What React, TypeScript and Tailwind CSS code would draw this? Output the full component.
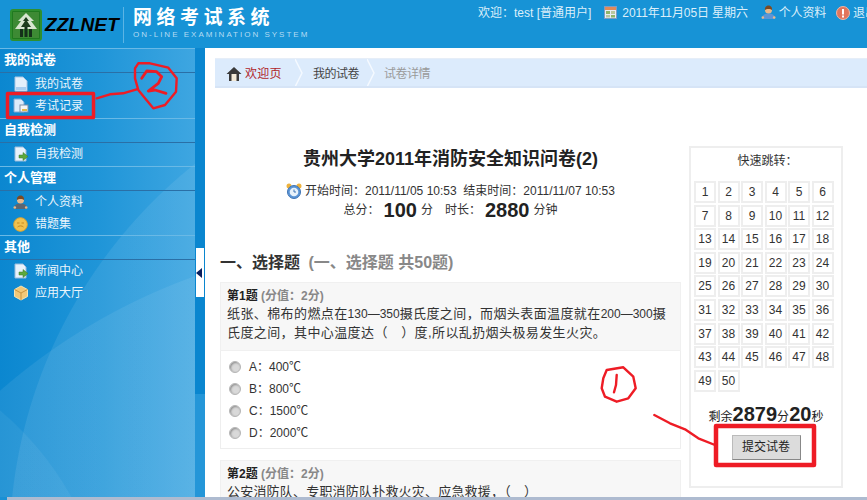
const font = "font-['Liberation_Sans','Noto_Sans_CJK_SC',sans-serif]";

function DocIcon() {
  return (
    <svg width="16" height="16" viewBox="0 0 16 16">
      <path d="M2 1h8l4 4v10H2z" fill="#e4f0fb" stroke="#a9c6e4" />
      <path d="M3 11h10v3H3z" fill="#a8cdf0" />
    </svg>
  );
}

function RecordIcon() {
  return (
    <svg width="16" height="16" viewBox="0 0 16 16">
      <path d="M1 1h7l3 3v10H1z" fill="#dcebfa" stroke="#7fa8d4" />
      <rect x="7" y="7" width="8" height="7" fill="#f4f4f4" stroke="#7a8ea8" />
      <rect x="9" y="11" width="5" height="2" fill="#e0b84a" />
    </svg>
  );
}

function DocArrowIcon() {
  return (
    <svg width="16" height="16" viewBox="0 0 16 16">
      <path d="M2 1h8l3 3v11H2z" fill="#e8f2fb" stroke="#9bbcdc" />
      <path d="M6 9h4V6.500l5 4-5 4V12H6z" fill="#5da83c" stroke="#3f7f28" strokeWidth="0.5" />
    </svg>
  );
}

function PersonIcon({ shirt = "#5c6672" }: { shirt?: string }) {
  return (
    <svg width="15" height="15" viewBox="0 0 15 15">
      <path d="M1 14c0-4 2.500-5.500 6.500-5.500S14 10 14 14z" fill={shirt} />
      <circle cx="7.500" cy="5" r="3.500" fill="#e8b98c" />
      <path d="M4 5c-.5-3 1.500-4.500 3.500-4.500S11.500 2 11 5C10 3.500 5 3.500 4 5z" fill="#7a4a25" />
      <circle cx="1.800" cy="12.500" r="1.300" fill="#e8b98c" />
      <circle cx="13.200" cy="12.500" r="1.300" fill="#e8b98c" />
    </svg>
  );
}

function SmileIcon() {
  return (
    <svg width="15" height="15" viewBox="0 0 15 15">
      <circle cx="7.500" cy="7.500" r="6.800" fill="#f2c14e" stroke="#e0a52e" />
      <path d="M4 6h2.500M8.500 6H11" stroke="#c98a1e" />
      <path d="M4.500 10c1.500-1.500 4.500-1.500 6 0" stroke="#c98a1e" fill="none" />
    </svg>
  );
}

function BoxIcon() {
  return (
    <svg width="16" height="16" viewBox="0 0 16 16">
      <path d="M8 1l6.500 3.500v7L8 15l-6.500-3.500v-7z" fill="#f1c878" stroke="#f7e3b0" />
      <path d="M1.500 4.500L8 8l6.500-3.500M8 8v7" stroke="#c9933e" fill="none" />
    </svg>
  );
}

function CalendarIcon() {
  return (
    <svg width="13" height="13" viewBox="0 0 13 13">
      <rect x="0.500" y="0.500" width="12" height="12" fill="#e8eef5" stroke="#7d9cc4" />
      <rect x="1" y="1" width="11" height="3" fill="#e08a5a" />
      <rect x="2" y="5" width="4" height="3" fill="#8fb56a" />
      <rect x="7" y="5" width="4" height="3" fill="#b9c7a0" />
      <rect x="2" y="9" width="4" height="2.500" fill="#b9c7a0" />
      <rect x="7" y="9" width="4" height="2.500" fill="#8fb56a" />
    </svg>
  );
}

function AlertIcon() {
  return (
    <svg width="14" height="14" viewBox="0 0 14 14">
      <circle cx="7" cy="7" r="6.500" fill="#e2755c" stroke="#f0b6a4" />
      <rect x="6" y="3" width="2" height="5.500" fill="#fff" />
      <rect x="6" y="9.500" width="2" height="2" fill="#fff" />
    </svg>
  );
}

function HomeIcon() {
  return (
    <svg width="16" height="16" viewBox="0 0 16 16">
      <path d="M8 1L0.500 8H3v7h10V8h2.500z" fill="#3a3a3a" />
      <rect x="5.500" y="8" width="5" height="7" fill="#f3ead8" />
    </svg>
  );
}

function ClockIcon() {
  return (
    <svg width="16" height="16" viewBox="0 0 16 16">
      <circle cx="3" cy="3" r="2.500" fill="#eeb23e" />
      <circle cx="13" cy="3" r="2.500" fill="#eeb23e" />
      <circle cx="8" cy="9" r="6.500" fill="#5b95d6" stroke="#3f74b4" />
      <circle cx="8" cy="9" r="4.300" fill="#e8f2fb" />
      <path d="M8 6.500V9h2" stroke="#3f74b4" fill="none" />
    </svg>
  );
}

function LogoIcon() {
  return (
    <svg width="32" height="32" viewBox="0 0 32 32" className="shrink-0">
      <rect x="1" y="1" width="30" height="30" rx="2" fill="#1f7a1f" stroke="#2f8f2f" strokeWidth="2" />
      <path d="M3 3h26v26H3z" fill="#3d8a34" />
      <path d="M16 4l8 8h-3l6 8H5l6-8H8z" fill="#d8e6d0" />
      <path d="M16 8l3 4h-2l4 6H11l4-6h-2z" fill="#1d3d1d" />
      <path d="M10 20h3v8h-3zM19 20h3v8h-3zM14.500 18h3v10h-3z" fill="#14301a" />
    </svg>
  );
}

function Chevron() {
  return (
    <svg width="8" height="28" viewBox="0 0 8 28" fill="none" stroke="#f4f9ff" strokeWidth="1.500">
      <path d="M0 0l7 14L0 28" />
    </svg>
  );
}

function MenuGroup({ title, items, extra }: { title: string; items: { icon: React.ReactNode; label: string }[]; extra?: boolean }) {
  return (
    <div className={extra ? "border-t border-[#69b9e6] pb-px" : "border-t border-[#69b9e6]"}>
      <div className="h-6 pl-1 border-b border-[#2a6fa6] text-[13px] font-bold leading-[22px] text-white">{title}</div>
      {items.map((item) => (
        <div key={item.label} className="h-[22px] flex items-center text-xs text-[#eaf5fc]">
          <span className="w-[35px] flex justify-center pl-[9px] pr-[3px]">{item.icon}</span>
          {item.label}
        </div>
      ))}
    </div>
  );
}

function Option({ label }: { label: string }) {
  return (
    <div className="h-[22px] flex items-center text-xs text-[#333]">
      <span className="ml-2 mr-2 w-3 h-3 rounded-full border border-[#b5b5b5] bg-[#d9d9d9] shadow-[inset_1px_1px_2px_#8f8f8f]" />
      {label}
    </div>
  );
}

export default function App() {
  const numbers = Array.from({ length: 50 }, (_, i) => i + 1);
  return (
    <div className={`${font} relative w-[867px] h-[500px] overflow-hidden bg-white flex flex-col`}>
      <header className="h-12 shrink-0 bg-[#1793d6] flex items-start">
        <div className="w-[478px] shrink-0 flex items-start pl-[10px] pt-[9px]">
          <LogoIcon />
          <span className="ml-[3px] mt-[6px] text-[19px] leading-5 font-bold italic tracking-[0.2px] text-black">ZZLNET</span>
          <span className="ml-[4px] -mt-[2px] h-9 w-px bg-[#5cb4e4]" />
          <div className="ml-[9px] -mt-[1px]">
            <div className="text-[19px] leading-[19px] font-bold tracking-[4.500px] text-white whitespace-nowrap">网络考试系统</div>
            <div className="mt-[3px] text-[8px] leading-[10px] tracking-[2px] text-[#b5dcf3] whitespace-nowrap">ON-LINE EXAMINATION SYSTEM</div>
          </div>
        </div>
        <div className="flex items-center h-[25px] text-xs text-[#dceffa] whitespace-nowrap">
          <span>欢迎：test [普通用户]</span>
          <span className="ml-[13px] mr-[5px]"><CalendarIcon /></span>
          <span className="tracking-[-0.1px]">2011年11月05日 星期六</span>
          <span className="ml-[13px] mr-[3px]"><PersonIcon shirt="#5b95d6" /></span>
          <span className="tracking-[-0.2px]">个人资料</span>
          <span className="ml-[10px] mr-[3px]"><AlertIcon /></span>
          <span>退出</span>
        </div>
      </header>

      <div className="flex-1 flex min-h-0">
        <aside className="w-[195px] shrink-0 bg-[radial-gradient(circle_at_400px_800px,rgba(255,255,255,0.07)_607px,transparent_608px),radial-gradient(circle_at_500px_500px,rgba(255,255,255,0.08)_490px,transparent_491px),radial-gradient(circle_at_-200px_600px,rgba(255,255,255,0.05)_310px,transparent_311px),linear-gradient(90deg,#0b87d0_0%,#1f95d8_50%,#3ea6e1_100%)]">
          <MenuGroup
            extra
            title="我的试卷"
            items={[
              { icon: <DocIcon />, label: "我的试卷" },
              { icon: <RecordIcon />, label: "考试记录" },
            ]}
          />
          <MenuGroup extra title="自我检测" items={[{ icon: <DocArrowIcon />, label: "自我检测" }]} />
          <MenuGroup
            title="个人管理"
            items={[
              { icon: <PersonIcon />, label: "个人资料" },
              { icon: <SmileIcon />, label: "错题集" },
            ]}
          />
          <MenuGroup
            title="其他"
            items={[
              { icon: <DocArrowIcon />, label: "新闻中心" },
              { icon: <BoxIcon />, label: "应用大厅" },
            ]}
          />
        </aside>

        <div className="w-[10px] shrink-0 bg-[linear-gradient(180deg,#0a86cf_0%,#0a86cf_77%,#2496d8_77%)] pt-[200px]">
          <div className="ml-px w-2 h-[49px] bg-white flex items-center">
            <span className="w-0 h-0 border-y-[5px] border-y-transparent border-r-[6px] border-r-[#0b1f5c]" />
          </div>
        </div>

        <main className="flex-1 min-w-0 overflow-hidden bg-white">
          <nav className="mt-[10px] ml-[10px] h-[30px] bg-[#dcebfc] border-t border-[#e6eef8] border-b-2 border-b-[#d6e4f6] flex items-center text-xs overflow-hidden">
            <span className="ml-[11px] mr-[3px] mt-[3px]"><HomeIcon /></span>
            <span className="text-[#b0252a] mt-[3px] tracking-[0.3px]">欢迎页</span>
            <span className="ml-[13px] mr-[10px]"><Chevron /></span>
            <span className="text-[#444] mt-[3px] tracking-[-0.5px]">我的试卷</span>
            <span className="ml-[8px] mr-[9px]"><Chevron /></span>
            <span className="text-[#9a9a9a] mt-[3px] tracking-[-0.5px]">试卷详情</span>
          </nav>

          <div className="flex items-start">
            <section className="ml-[15px] w-[461px] shrink-0">
              <h1 className="mt-[61px] text-[18px] leading-5 font-bold text-center text-[#222]">贵州大学2011年消防安全知识问卷(2)</h1>
              <div className="mt-[13px] h-[18px] flex items-center justify-center text-xs text-[#333]">
                <span className="mr-[3px]"><ClockIcon /></span>
                <span>开始时间：2011/11/05 10:53&nbsp;&nbsp;结束时间：2011/11/07 10:53</span>
              </div>
              <div className="h-[20px] flex items-center justify-center text-xs text-[#333]">
                总分：<span className="mx-1 text-xl font-bold text-[#222]">100</span>分
                <span className="ml-[12px]">时长：</span>
                <span className="mx-1 text-xl font-bold text-[#222]">2880</span>分钟
              </div>
              <h2 className="mt-[32px] h-[22px] text-base leading-[22px] font-bold text-[#333]">
                一、选择题 <span className="ml-1 text-[#888]">(一、选择题 共50题)</span>
              </h2>
              <div className="mt-2 bg-[#f7f7f7] border border-[#f0f0f0] px-[6px] pt-[5px] pb-[8px] text-[13px] leading-[19px] text-[#333] tracking-[0.4px]">
                <div className="text-xs font-bold text-[#222] tracking-normal">第1题 <span className="text-[#888]">(分值：2分)</span></div>
                <p className="whitespace-nowrap">
                  纸张、棉布的燃点在<span className="text-xs tracking-normal">130—350</span>摄氏度之间，而烟头表面温度就在<span className="text-xs tracking-normal">200—300</span>摄
                  <br />
                  氏度之间，其中心温度达（　）度,所以乱扔烟头极易发生火灾。
                </p>
              </div>
              <div className="h-[98px] border border-t-0 border-[#eee] pt-[5px]">
                <Option label="A：400℃" />
                <Option label="B：800℃" />
                <Option label="C：1500℃" />
                <Option label="D：2000℃" />
              </div>
              <div className="mt-[11px] bg-[#f7f7f7] border border-[#f0f0f0] px-[6px] pt-[5px] text-[13px] leading-[19px] text-[#333]">
                <div className="text-xs font-bold text-[#222]">第2题 <span className="text-[#888]">(分值：2分)</span></div>
                <p className="tracking-[0.2px]">公安消防队、专职消防队扑救火灾、应急救援，（　）</p>
              </div>
            </section>

            <section className="ml-[8px] mt-[58px] w-[154px] h-[342px] border-2 border-[#eee] pl-[3px] shrink-0">
              <div className="mt-[3px] text-xs leading-5 text-center text-[#333]">快速跳转：</div>
              <div className="mt-[10px] grid grid-cols-[repeat(6,22px)] gap-x-[1.500px] gap-y-[1.600px]">
                {numbers.map((n) => (
                  <div key={n} className="h-[22px] border-2 border-[#eee] flex items-center justify-center text-xs text-[#333]">{n}</div>
                ))}
              </div>
              <div className="mt-[8px] pr-[3px] text-xs leading-[24px] text-center text-[#222] whitespace-nowrap">
                剩余<span className="text-xl font-bold">2879</span>分<span className="text-xl font-bold">20</span>秒
              </div>
              <div className="mt-[6px] pr-[3px] flex justify-center">
                <button className="w-[69px] h-[25px] bg-[#dcdcdc] border border-[#bbb] border-b-[#888] border-r-[#888] text-xs text-[#222]">提交试卷</button>
              </div>
            </section>
          </div>
        </main>
      </div>

      <div className="h-[3px] shrink-0 flex">
        <div className="w-[7px] bg-[#1a90d4]" />
        <div className="flex-1 bg-[#aebbd0]" />
      </div>

      {/* hand drawn red notes over the page */}
      <svg className="absolute inset-0 pointer-events-none" width="867" height="500" viewBox="0 0 867 500" fill="none" stroke="#ee1c25" strokeLinejoin="round" strokeLinecap="round">
        <rect x="7.500" y="93.500" width="86" height="24" strokeWidth="3.500" />
        <polyline points="96.700,98.300 110,94.300 123,93.300 136.700,89.300" strokeWidth="2.400" />
        <polyline points="135,68.300 138.300,63.300 150,63.300 168.300,67.700 176.700,78.300 176,91.700 165,105 153.300,108.300 145,98.300 138.300,90 135,78.300 135,68.300" strokeWidth="2.400" />
        <polyline points="141.700,78.300 146.700,71 156.700,71.700 161.700,76.700 158.300,83.300 148.300,91 155,90 166,93.300" strokeWidth="2.800" />
        <rect x="716" y="426" width="98" height="39" strokeWidth="4.500" />
        <polyline points="654.300,415 670,423.300 685,429.300 698.300,438.300 715,445" strokeWidth="2.400" />
        <polyline points="606.700,370 623.300,367.300 633.300,376.700 635.700,388.300 628.300,398.300 616.700,401.700 605,396.700 601.700,388.300 603.300,378.300 606.700,370" strokeWidth="2.400" />
        <polyline points="616.700,375 616,385 614,392.300" strokeWidth="2.400" />
      </svg>
    </div>
  );
}
